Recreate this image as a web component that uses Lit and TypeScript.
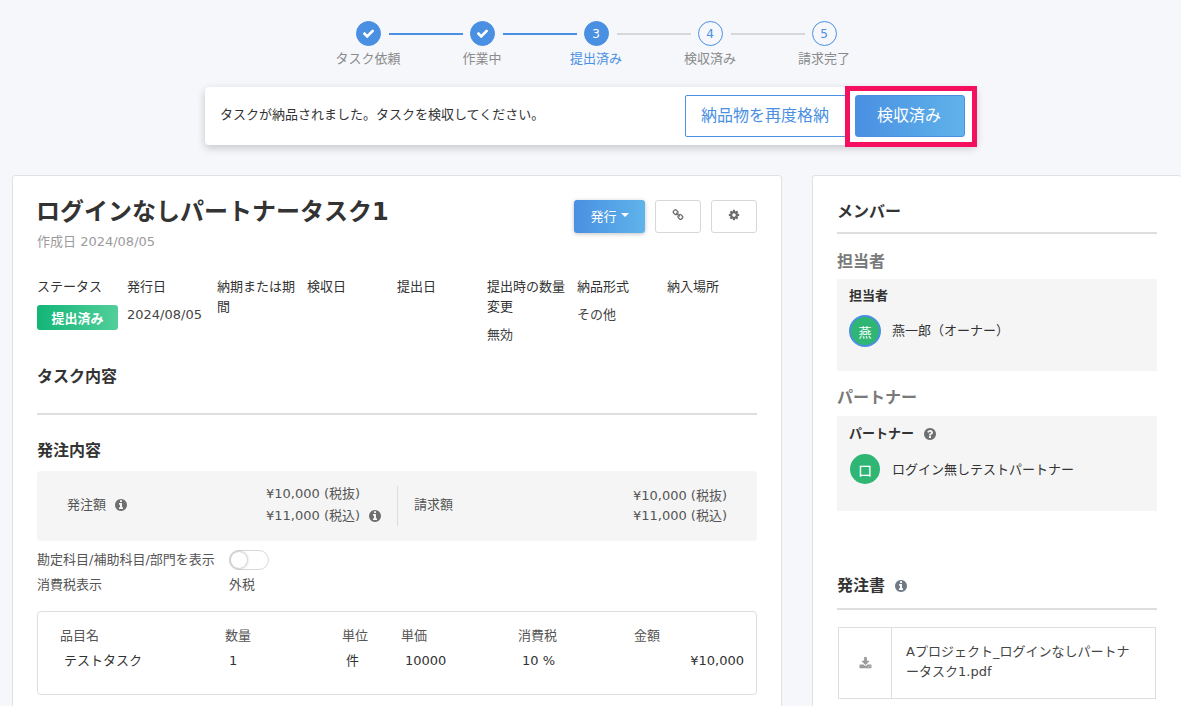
import { LitElement, css, html, svg } from "lit";
import { customElement } from "lit/decorators.js";

const ICONS: Record<string, string> = {
  check:
    "M1671 566q0 40-28 68l-724 724-136 136q-28 28-68 28t-68-28l-136-136-362-362q-28-28-28-68t28-68l136-136q28-28 68-28t68 28l294 295 656-657q28-28 68-28t68 28l136 136q28 28 28 68z",
  info:
    "M1152 1376v-160q0-14-9-23t-23-9h-96v-512q0-14-9-23t-23-9h-320q-14 0-23 9t-9 23v160q0 14 9 23t23 9h96v320h-96q-14 0-23 9t-9 23v160q0 14 9 23t23 9h448q14 0 23-9t9-23zm-128-896v-160q0-14-9-23t-23-9h-192q-14 0-23 9t-9 23v160q0 14 9 23t23 9h192q14 0 23-9t9-23zm640 416q0 209-103 385.5t-279.5 279.5-385.5 103-385.5-103-279.5-279.5-103-385.5 103-385.5 279.5-279.5 385.5-103 385.5 103 279.5 279.5 103 385.5z",
  question:
    "M1024 1376v-192q0-14-9-23t-23-9h-192q-14 0-23 9t-9 23v192q0 14 9 23t23 9h192q14 0 23-9t9-23zm256-672q0-88-55.5-163t-138.5-116-170-41q-243 0-371 213-15 24 8 42l132 100q7 6 19 6 16 0 25-12 53-68 86-92 34-24 86-24 48 0 85.5 26t37.5 59q0 38-20 61t-68 45q-63 28-115.5 86.5t-52.5 125.5v36q0 14 9 23t23 9h192q14 0 23-9t9-23q0-19 21.5-49.5t54.5-49.5q32-18 49-28.5t46-35 44.5-48 28-60.5 12.5-81zm384 192q0 209-103 385.5t-279.5 279.5-385.5 103-385.5-103-279.5-279.5-103-385.5 103-385.5 279.5-279.5 385.5-103 385.5 103 279.5 279.5 103 385.5z",
  cog:
    "M1152 896q0-106-75-181t-181-75-181 75-75 181 75 181 181 75 181-75 75-181zm512-109v222q0 12-8 23t-20 13l-185 28q-19 54-39 91 35 50 107 138 10 12 10 25t-9 23q-27 37-99 108t-94 71q-12 0-26-9l-138-108q-44 23-91 38-16 136-29 186-7 28-36 28h-222q-14 0-24.5-8.5t-11.5-21.5l-28-184q-49-16-90-37l-141 107q-10 9-25 9-14 0-25-11-126-114-165-168-7-10-7-23 0-12 8-23 15-21 51-66.5t54-70.5q-27-50-41-99l-183-27q-13-2-21-12.5t-8-23.5v-222q0-12 8-23t19-13l186-28q14-46 39-92-40-57-107-138-10-12-10-24 0-10 9-23 26-36 98.5-107.5t94.5-71.5q13 0 26 10l138 107q44-23 91-38 16-136 29-186 7-28 36-28h222q14 0 24.5 8.5t11.5 21.5l28 184q49 16 90 37l142-107q9-9 24-9 13 0 25 10 129 119 165 170 7 8 7 22 0 12-8 23-15 21-51 66.5t-54 70.5q26 50 41 98l183 28q13 2 21 12.5t8 23.5z",
  download:
    "M1344 1344q0-26-19-45t-45-19-45 19-19 45 19 45 45 19 45-19 19-45zm256 0q0-26-19-45t-45-19-45 19-19 45 19 45 45 19 45-19 19-45zm128-224v320q0 40-28 68t-68 28h-1472q-40 0-68-28t-28-68v-320q0-40 28-68t68-28h465l135 136q58 56 136 56t136-56l136-136h464q40 0 68 28t28 68zm-325-569q17 41-14 70l-448 448q-18 19-45 19t-45-19l-448-448q-31-29-14-70 17-39 59-39h256v-448q0-26 19-45t45-19h256q26 0 45 19t19 45v448h256q42 0 59 39z",
  link:
    "M1520 1216q0-40-28-68l-208-208q-28-28-68-28-42 0-72 32 3 3 19 18.500t21.500 21.500 15 19 13 25.500 3.500 27.500q0 40-28 68t-68 28q-15 0-27.500-3.500t-25.500-13-19-15-21.500-21.500-18.500-19q-33 31-33 73 0 40 28 68l206 207q27 27 68 27 40 0 68-26l147-146q28-28 28-67zm-703-705q0-40-28-68l-206-207q-28-28-68-28-39 0-68 27l-147 146q-28 28-28 67 0 40 28 68l208 208q27 27 68 27 42 0 72-31-3-3-19-18.500t-21.500-21.500-15-19-13-25.500-3.500-27.500q0-40 28-68t68-28q15 0 27.500 3.500t25.500 13 19 15 21.500 21.500 18.500 19q33-31 33-73zm895 705q0 120-85 203l-147 146q-83 83-203 83-121 0-204-85l-206-207q-83-83-83-203 0-123 88-209l-88-88q-86 88-208 88-120 0-204-84l-208-208q-84-84-84-204t85-203l147-146q83-83 203-83 121 0 204 85l206 207q83 83 83 203 0 123-88 209l88 88q86-88 208-88 120 0 204 84l208 208q84 84 84 204z",
};

const icon = (name: string, size: number) => html`<svg
  class="icon"
  width=${size}
  height=${size}
  viewBox="0 0 1792 1792"
  fill="currentColor"
>
  ${svg`<path d=${ICONS[name]}></path>`}
</svg>`;

const STEPS = [
  { label: "タスク依頼", state: "done" },
  { label: "作業中", state: "done" },
  { label: "提出済み", state: "current" },
  { label: "検収済み", state: "todo" },
  { label: "請求完了", state: "todo" },
];

const META = [
  ["ステータス", ""],
  ["発行日", "2024/08/05"],
  ["納期または期間", ""],
  ["検収日", ""],
  ["提出日", ""],
  ["提出時の数量変更", "無効"],
  ["納品形式", "その他"],
  ["納入場所", ""],
];

@customElement("app-root")
export class AppRoot extends LitElement {
  static styles = css`
    :host {
      display: block;
      height: 706px;
      overflow: hidden;
      background: #f5f7fb;
      color: #333;
      font-family: "DejaVu Sans", "Noto Sans CJK JP", sans-serif;
      font-size: 13px;
    }
    * {
      box-sizing: border-box;
    }
    .icon {
      display: block;
      flex: none;
    }

    .steps {
      display: flex;
      justify-content: center;
      padding: 21px 0 0 11px;
      height: 87px;
    }
    .step {
      position: relative;
      width: 114px;
      display: flex;
      flex-direction: column;
      align-items: center;
    }
    .step:not(:last-child)::after {
      content: "";
      position: absolute;
      left: 78px;
      top: 12px;
      width: 74px;
      height: 2px;
      background: #d8d8d8;
    }
    .step.done::after {
      background: #4a90e2;
    }
    .circle {
      width: 25px;
      height: 25px;
      border-radius: 50%;
      display: flex;
      align-items: center;
      justify-content: center;
      border: 1px solid #4a90e2;
      color: #4a90e2;
      font-size: 12px;
      line-height: 1;
    }
    .done .circle,
    .current .circle {
      background: #4a90e2;
      color: #fff;
    }
    .step-label {
      margin-top: 4px;
      line-height: 18px;
      color: #8b8b8b;
      white-space: nowrap;
    }
    .current .step-label {
      color: #4a90e2;
    }

    .notice {
      position: relative;
      width: 771px;
      height: 58px;
      margin: 0 auto;
      padding: 8px 11px 8px 15px;
      display: flex;
      align-items: center;
      background: #fff;
      border-radius: 4px;
      box-shadow: 0 3px 8px rgba(0, 0, 0, 0.2);
    }
    .notice-text {
      flex: 1;
      padding-bottom: 6px;
    }
    .btn-outline {
      width: 165px;
      height: 42px;
      margin-right: 5px;
      padding: 0 5px 5px 0;
      display: flex;
      align-items: center;
      justify-content: center;
      border: 1px solid #4a90e2;
      border-radius: 2px;
      color: #4a90e2;
      font-size: 16px;
    }
    .btn-primary {
      width: 110px;
      height: 42px;
      padding: 0 2px 5px 0;
      display: flex;
      align-items: center;
      justify-content: center;
      border: 1px solid #4a90e2;
      border-radius: 3px;
      background: linear-gradient(to right, #4a90e2, #5fb3ea);
      color: #fff;
      font-size: 16px;
    }
    .highlight {
      position: absolute;
      right: -1px;
      top: -1px;
      width: 132px;
      height: 61px;
      border: 5px solid #f50f5f;
    }

    .columns {
      display: flex;
      align-items: flex-start;
      margin-top: 30px;
      padding-left: 12px;
    }
    .card {
      background: #fff;
      border: 1px solid #e2e2e2;
      border-radius: 3px;
      padding: 24px;
    }
    .main {
      width: 770px;
      height: 600px;
    }
    .side {
      width: 369px;
      height: 600px;
      margin-left: 30px;
      padding-top: 25px;
      border-right: none;
    }

    .head {
      display: flex;
      justify-content: space-between;
      align-items: flex-start;
    }
    h1 {
      margin: 0 0 0 -1px;
      padding-top: 2px;
      font-size: 24px;
      line-height: 20px;
      font-weight: 700;
      color: #333;
    }
    .created {
      margin-top: 11px;
      line-height: 18px;
      color: #9b9b9b;
    }
    .actions {
      display: flex;
    }
    .btn-issue {
      width: 71px;
      height: 33px;
      padding-bottom: 3px;
      display: flex;
      align-items: center;
      justify-content: center;
      gap: 4px;
      border-radius: 3px;
      background: linear-gradient(to right, #4a90e2, #5fb3ea);
      box-shadow: 0 1px 4px rgba(0, 0, 0, 0.25);
      color: #fff;
    }
    .caret {
      width: 0;
      height: 0;
      border-left: 4px solid transparent;
      border-right: 4px solid transparent;
      border-top: 4px solid #fff;
    }
    .btn-icon {
      width: 46px;
      height: 33px;
      margin-left: 10px;
      display: flex;
      align-items: center;
      justify-content: center;
      padding-bottom: 3px;
      border: 1px solid #d8d8d8;
      border-radius: 3px;
      color: #6b6b6b;
    }

    .meta {
      display: grid;
      grid-template-columns: repeat(8, 90px);
      margin-top: 26px;
      height: 89px;
    }
    .meta-item {
      padding-right: 10px;
    }
    .meta-label {
      line-height: 20px;
      color: #333;
    }
    .meta-value {
      margin-top: 8px;
      line-height: 20px;
      color: #444;
      white-space: nowrap;
    }
    .badge {
      width: 81px;
      height: 25px;
      margin-top: 8px;
      padding-bottom: 1px;
      display: flex;
      align-items: center;
      justify-content: center;
      border-radius: 3px;
      background: linear-gradient(to right, #13b577, #52cf9b);
      color: #fff;
      font-weight: 700;
    }

    h2 {
      margin: 0;
      font-size: 16px;
      line-height: 22px;
      font-weight: 700;
      color: #333;
    }
    .rule {
      height: 2px;
      background: #dedede;
    }
    .content-title {
      padding-bottom: 25px;
    }
    .order-title {
      margin-top: 25px;
    }
    .totals {
      display: flex;
      align-items: center;
      height: 70px;
      margin-top: 9px;
      background: #f5f5f5;
      border-radius: 4px;
    }
    .totals-left {
      display: grid;
      grid-template-columns: 199px 1fr;
      grid-template-rows: 40px;
      align-items: center;
      width: 361px;
      height: 40px;
      padding-left: 30px;
      border-right: 1px solid #dcdcdc;
    }
    .with-icon {
      display: flex;
      align-items: center;
      gap: 8px;
      color: #555;
      line-height: 20px;
    }
    .total-name {
      padding-bottom: 2px;
    }
    .gray {
      color: #6f6f6f;
    }
    .amounts {
      line-height: 22px;
      white-space: nowrap;
      color: #555;
    }
    .amounts-left {
      padding-bottom: 2px;
    }
    .amounts-left .with-icon {
      line-height: 22px;
    }
    .totals-right {
      flex: 1;
      display: flex;
      justify-content: space-between;
      align-items: center;
      padding: 0 30px 0 16px;
      color: #555;
    }
    .totals-right .amounts {
      line-height: 20px;
    }
    .toggle-row {
      display: grid;
      grid-template-columns: 192px 1fr;
      align-items: center;
      margin-top: 8px;
      height: 20px;
      color: #555;
      white-space: nowrap;
    }
    .toggle-row .row-text {
      padding-bottom: 2px;
    }
    .tax-row {
      margin-top: 5px;
    }
    .toggle {
      position: relative;
      width: 40px;
      height: 20px;
      border: 1px solid #d8d8d8;
      border-radius: 10px;
      background: #fff;
    }
    .toggle::before {
      content: "";
      position: absolute;
      left: 1px;
      top: 1px;
      width: 16px;
      height: 16px;
      border-radius: 50%;
      background: #fff;
      box-shadow: 0 0 3px rgba(0, 0, 0, 0.45);
    }
    .items {
      margin-top: 17px;
      height: 84px;
      padding: 14px 12px 0 22px;
      border: 1px solid #dedede;
      border-radius: 4px;
      color: #555;
    }
    .item-row {
      display: grid;
      grid-template-columns: 165px 117px 59px 117px 116px 1fr;
      line-height: 20px;
    }
    .item-row + .item-row {
      margin-top: 5px;
      color: #333;
    }
    .item-row + .item-row span {
      padding-left: 4px;
    }
    .item-row + .item-row span:last-child {
      text-align: right;
    }

    .member-title {
      padding-bottom: 9px;
      border-bottom: 2px solid #dedede;
    }
    h3 {
      margin: 0;
      font-size: 16px;
      line-height: 22px;
      font-weight: 700;
      color: #7a7a7a;
    }
    .assign-title {
      margin-top: 17px;
    }
    .box {
      margin-top: 6px;
      padding: 8px 12px 0;
      height: 92px;
      background: #f5f5f5;
    }
    .box-label {
      display: flex;
      align-items: center;
      gap: 9px;
      line-height: 18px;
      font-weight: 700;
      color: #333;
    }
    .box-label .icon {
      color: #6f6f6f;
    }
    .person {
      display: flex;
      align-items: center;
      gap: 11px;
      margin-top: 10px;
    }
    .person-name {
      padding-bottom: 3px;
    }
    .avatar {
      width: 32px;
      height: 32px;
      display: flex;
      align-items: center;
      justify-content: center;
      border-radius: 50%;
      background: #2fb574;
      color: #fff;
      border: 2px solid #4a90e2;
    }
    .partner-title {
      margin-top: 16px;
    }
    .partner-box {
      height: 95px;
      margin-top: 7px;
      padding-top: 9px;
    }
    .partner-box .person {
      margin-top: 11px;
      gap: 12px;
    }
    .partner-box .person-name {
      padding-bottom: 2px;
    }
    .partner-box .avatar {
      width: 30px;
      height: 30px;
      margin-left: 1px;
      border: none;
      font-size: 15px;
    }
    .doc-title {
      display: flex;
      align-items: center;
      gap: 9px;
      margin-top: 64px;
      padding-bottom: 11px;
      border-bottom: 2px solid #dedede;
    }
    .doc-title .icon {
      color: #6f7a85;
    }
    .doc {
      display: flex;
      height: 72px;
      margin: 17px 1px 0;
      border: 1px solid #dedede;
    }
    .doc-icon {
      width: 53px;
      flex: none;
      display: flex;
      align-items: center;
      justify-content: center;
      border-right: 1px solid #dedede;
      color: #9b9b9b;
    }
    .doc-name {
      padding: 14px 16px 0 14px;
      line-height: 20px;
      color: #444;
      line-break: loose;
    }
  `;

  render() {
    return html`
      <div class="steps">
        ${STEPS.map(
          (s, i) => html`<div class="step ${s.state}">
            <div class="circle">
              ${s.state === "done" ? icon("check", 13) : i + 1}
            </div>
            <div class="step-label">${s.label}</div>
          </div>`
        )}
      </div>

      <div class="notice">
        <div class="notice-text">
          タスクが納品されました。タスクを検収してください。
        </div>
        <div class="btn-outline">納品物を再度格納</div>
        <div class="btn-primary">検収済み</div>
        <div class="highlight"></div>
      </div>

      <div class="columns">
        <section class="card main">
          <div class="head">
            <div>
              <h1>ログインなしパートナータスク1</h1>
              <div class="created">作成日 2024/08/05</div>
            </div>
            <div class="actions">
              <div class="btn-issue">発行<span class="caret"></span></div>
              <div class="btn-icon">${icon("link", 12)}</div>
              <div class="btn-icon">${icon("cog", 12)}</div>
            </div>
          </div>

          <div class="meta">
            ${META.map(
              ([label, value], i) => html`<div class="meta-item">
                <div class="meta-label">${label}</div>
                ${i === 0
                  ? html`<div class="badge">提出済み</div>`
                  : value
                  ? html`<div class="meta-value">${value}</div>`
                  : ""}
              </div>`
            )}
          </div>

          <h2 class="content-title">タスク内容</h2>
          <div class="rule"></div>

          <h2 class="order-title">発注内容</h2>
          <div class="totals">
            <div class="totals-left">
              <div class="with-icon total-name">
                発注額 <span class="gray">${icon("info", 14)}</span>
              </div>
              <div class="amounts amounts-left">
                <div>¥10,000 (税抜)</div>
                <div class="with-icon">
                  ¥11,000 (税込) <span class="gray">${icon("info", 14)}</span>
                </div>
              </div>
            </div>
            <div class="totals-right">
              <div class="with-icon total-name">請求額</div>
              <div class="amounts">
                <div>¥10,000 (税抜)</div>
                <div>¥11,000 (税込)</div>
              </div>
            </div>
          </div>

          <div class="toggle-row">
            <div class="row-text">勘定科目/補助科目/部門を表示</div>
            <div class="toggle"></div>
          </div>
          <div class="toggle-row tax-row">
            <div class="row-text">消費税表示</div>
            <div class="row-text">外税</div>
          </div>

          <div class="items">
            <div class="item-row">
              <span>品目名</span><span>数量</span><span>単位</span
              ><span>単価</span><span>消費税</span><span>金額</span>
            </div>
            <div class="item-row">
              <span>テストタスク</span><span>1</span><span>件</span
              ><span>10000</span><span>10 %</span><span>¥10,000</span>
            </div>
          </div>
        </section>

        <aside class="card side">
          <h2 class="member-title">メンバー</h2>
          <h3 class="assign-title">担当者</h3>
          <div class="box">
            <div class="box-label">担当者</div>
            <div class="person">
              <div class="avatar">燕</div>
              <div class="person-name">燕一郎（オーナー）</div>
            </div>
          </div>
          <h3 class="partner-title">パートナー</h3>
          <div class="box partner-box">
            <div class="box-label">パートナー ${icon("question", 14)}</div>
            <div class="person">
              <div class="avatar">ロ</div>
              <div class="person-name">ログイン無しテストパートナー</div>
            </div>
          </div>
          <h2 class="doc-title">発注書 ${icon("info", 14)}</h2>
          <div class="doc">
            <div class="doc-icon">${icon("download", 13)}</div>
            <div class="doc-name">Aプロジェクト_ログインなしパートナータスク1.pdf</div>
          </div>
        </aside>
      </div>
    `;
  }
}
